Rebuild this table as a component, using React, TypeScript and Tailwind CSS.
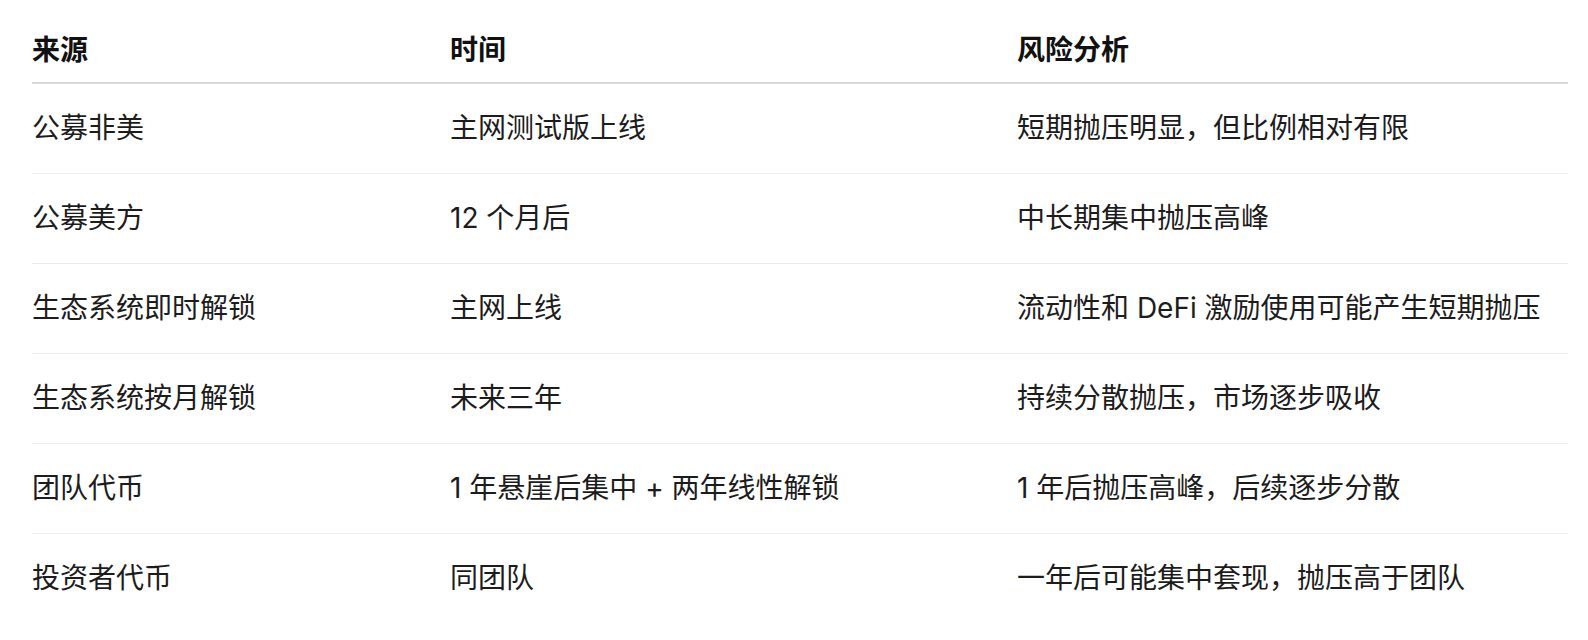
import React from "react";

const rows: [string, string, string][] = [
  ["公募非美", "主网测试版上线", "短期抛压明显，但比例相对有限"],
  ["公募美方", "12 个月后", "中长期集中抛压高峰"],
  ["生态系统即时解锁", "主网上线", "流动性和 DeFi 激励使用可能产生短期抛压"],
  ["生态系统按月解锁", "未来三年", "持续分散抛压，市场逐步吸收"],
  ["团队代币", "1 年悬崖后集中 + 两年线性解锁", "1 年后抛压高峰，后续逐步分散"],
  ["投资者代币", "同团队", "一年后可能集中套现，抛压高于团队"],
];

export default function App() {
  return (
    <div
      className="bg-white w-full h-screen overflow-hidden flex flex-col pl-8 pr-5 text-[#1c1c1c]"
      style={{ fontFamily: 'Inter, "Noto Sans CJK SC", sans-serif' }}
    >
      <h2 className="text-[30px] leading-[40px] font-bold text-[#111] mt-[-35px] pl-2 whitespace-nowrap shrink-0">
        3. 代币解锁抛压分析
      </h2>
      <div className="grid grid-cols-[418px_567px_1fr] text-[28px] leading-[40px] mt-[13px]">
        <div className="font-semibold pt-[12px] pb-[12px] border-b-2 border-[#d9d9d9] text-[#111]">来源</div>
        <div className="font-semibold pt-[12px] pb-[12px] border-b-2 border-[#d9d9d9] text-[#111]">时间</div>
        <div className="font-semibold pt-[12px] pb-[12px] border-b-2 border-[#d9d9d9] text-[#111]">风险分析</div>
        {rows.map((r, i) =>
          r.map((c, j) => (
            <div
              key={`${i}-${j}`}
              className={
                i === rows.length - 1
                  ? "pt-6 pb-[25px] whitespace-nowrap"
                  : "pt-6 pb-[25px] border-b border-[#ececec] whitespace-nowrap"
              }
            >
              {c}
            </div>
          ))
        )}
      </div>
    </div>
  );
}
